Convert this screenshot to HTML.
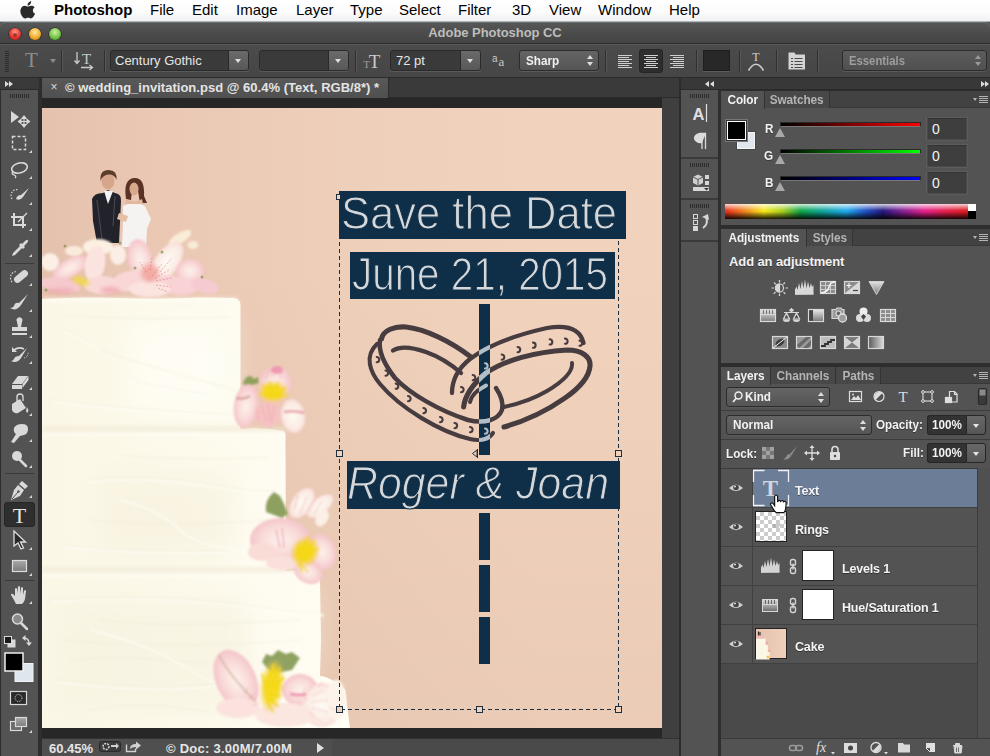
<!DOCTYPE html>
<html><head><meta charset="utf-8">
<style>
*{box-sizing:border-box;margin:0;padding:0}
html,body{width:990px;height:756px;overflow:hidden;background:#535353;font-family:"Liberation Sans",sans-serif;}
.abs{position:absolute}
.cx{display:inline-block;transform:scaleX(.9);transform-origin:0 50%;font-style:normal}
.cc{display:inline-block;transform:scaleX(.91);transform-origin:50% 50%;font-style:normal}
#root{position:relative;width:990px;height:756px;overflow:hidden;background:#535353}
/* menu bar */
#menubar{left:0;top:0;width:990px;height:22px;background:linear-gradient(#fff,#fbfbfb 60%,#f1f1f1);border-bottom:1px solid #a9b7bc}
#menubar span{position:absolute;top:1px;font-size:15px;color:#000;white-space:nowrap;line-height:17px}
/* title bar */
#titlebar{left:0;top:22px;width:990px;height:22px;box-shadow:inset 0 1px 0 #6e6e6e;background:linear-gradient(#585858,#4a4a4a 60%,#444);border-bottom:1px solid #2c2c2c;border-radius:5px 5px 0 0}
#titlebar .t{position:absolute;left:0;width:990px;top:3px;text-align:center;font-size:13px;font-weight:bold;color:#bdbdbd;letter-spacing:-.05px}
.tl{position:absolute;top:6px;width:12px;height:12px;border-radius:6px;box-shadow:0 0 0 .6px rgba(0,0,0,.55),0 1px 0 rgba(255,255,255,.18)}
.tl.r:after{content:"";position:absolute;left:4px;top:4.500px;width:4px;height:4px;border-radius:2px;background:rgba(60,0,0,.45)}
/* options bar */
#optbar{left:0;top:44px;width:990px;height:34px;background:linear-gradient(#4b4b4b,#464646);border-bottom:1px solid #2b2b2b;border-top:1px solid #5a5a5a}
.sep{position:absolute;top:50px;width:1px;height:22px;background:#2f2f2f;box-shadow:1px 0 0 #585858}
.dd{position:absolute;top:50px;height:21px;background:#3a3a3a;border:1px solid #2a2a2a;border-radius:3px;box-shadow:0 1px 0 #5a5a5a;color:#e6e6e6;font-size:13px;line-height:19px;padding-left:4px;white-space:nowrap;overflow:hidden}
.dd .b{position:absolute;right:0;top:0;width:20px;height:19px;background:linear-gradient(#6a6a6a,#585858);border-left:1px solid #2a2a2a}
.dd .b:after{content:"";position:absolute;left:6px;top:8px;border:3.5px solid transparent;border-top:4px solid #e0e0e0}
.dim.ud:before{border-bottom-color:#999}.dim.ud:after{border-top-color:#999}
.sel{position:absolute;top:50px;height:21px;background:linear-gradient(#646464,#555);border:1px solid #2c2c2c;border-radius:3px;box-shadow:0 1px 0 #5a5a5a;color:#f0f0f0;font-size:13px;line-height:19px;padding-left:6px;font-weight:bold}
.ud:before{content:"";position:absolute;right:5px;top:1px;border:3px solid transparent;border-bottom:4px solid #ddd}
.ud:after{content:"";position:absolute;right:5px;top:11px;border:3px solid transparent;border-top:4px solid #ddd}
</style></head><body><div id="root">

<!-- MENUBAR -->
<div id="menubar" class="abs">
<span style="left:54px;font-weight:bold">Photoshop</span>
<span style="left:150px">File</span><span style="left:192px">Edit</span><span style="left:236px">Image</span><span style="left:296px">Layer</span><span style="left:350px">Type</span><span style="left:399px">Select</span><span style="left:458px">Filter</span><span style="left:512px">3D</span><span style="left:549px">View</span><span style="left:598px">Window</span><span style="left:669px">Help</span>
</div>
<!-- TITLEBAR -->
<div id="titlebar" class="abs"><div class="t">Adobe Photoshop CC</div>
<div class="tl r" style="left:9px;background:radial-gradient(circle at 50% 35%,#ff9a8a,#e0302a 60%,#a01814)"></div>
<div class="tl" style="left:29px;background:radial-gradient(circle at 50% 35%,#ffe9a0,#f0a828 60%,#b87410)"></div>
<div class="tl" style="left:49px;background:radial-gradient(circle at 50% 35%,#d0f0a0,#6cc040 60%,#3a8a1c)"></div>
</div>
<!-- OPTIONS BAR -->
<div id="optbar" class="abs"></div>
<!-- apple logo -->
<svg class="abs" style="left:19px;top:1px" width="18" height="19" viewBox="0 0 18 19"><path d="M12.2 0.3c.1 1.1-.3 2.100-1 2.900-.7.800-1.700 1.400-2.700 1.300-.1-1 .4-2.100 1-2.800.7-.800 1.900-1.400 2.700-1.400zM15.600 6.400c-1.100.700-1.700 1.700-1.700 3 0 1.500.9 2.700 2.200 3.200-.3.900-.7 1.700-1.200 2.500-.8 1.200-1.600 2.300-2.900 2.300-1.200 0-1.600-.7-3-.7s-1.900.7-3 .8c-1.200 0-2.200-1.200-3-2.400C1.400 12.700.6 9.200 2.200 6.900c.8-1.300 2.200-2 3.700-2.100 1.200 0 2.300.8 3 .8.700 0 2.100-1 3.500-.8.600 0 2.300.2 3.200 1.600z" fill="#2a2a2a"/></svg>
<!-- gripper -->
<div class="abs" style="left:5px;top:51px;width:4px;height:21px;background:repeating-linear-gradient(#2c2c2c 0 1px,transparent 1px 2px)"></div>
<!-- T tool preset -->
<div class="abs" style="left:21px;top:46px;width:21px;height:28px;font-family:'Liberation Serif',serif;font-size:21px;line-height:28px;color:#8c8c8c;text-align:center">T</div>
<div class="abs" style="left:50px;top:59px;border:3px solid transparent;border-top:4px solid #8a8a8a"></div>
<div class="sep" style="left:61px"></div>
<!-- orientation -->
<svg class="abs" style="left:73px;top:50px" width="22" height="22" viewBox="0 0 22 22"><g stroke="#c9c9c9" fill="none" stroke-width="1.3"><path d="M4 2v11M1.500 10.500L4 13.500 6.500 10.500"/><path d="M8 17.500h11M16.500 15l3 2.500-3 2.500"/></g><text x="13.500" y="14" font-family="Liberation Serif" font-size="15" fill="#c9c9c9" text-anchor="middle">T</text></svg>
<div class="sep" style="left:104px"></div>
<div class="dd" style="left:110px;width:139px">Century Gothic<div class="b"></div></div>
<div class="dd" style="left:259px;width:90px"><div class="b"></div></div>
<div class="sep" style="left:355px"></div>
<svg class="abs" style="left:361px;top:51px" width="22" height="20" viewBox="0 0 22 20"><text x="5.500" y="17" font-family="Liberation Serif" font-size="11" fill="#9a9a9a" text-anchor="middle">T</text><text x="13.500" y="17" font-family="Liberation Serif" font-size="19" fill="#c9c9c9" text-anchor="middle">T</text></svg>
<div class="dd" style="left:390px;width:91px;padding-left:5px">72 pt<div class="b"></div></div>
<svg class="abs" style="left:491px;top:51px" width="18" height="18" viewBox="0 0 18 18"><text x="1" y="11" font-family="Liberation Sans" font-size="10" fill="#c9c9c9">a</text><text x="7.500" y="15" font-family="Liberation Serif" font-size="13" fill="#c9c9c9">a</text></svg>
<div class="sel ud" style="left:519px;width:80px"><i class="cx">Sharp</i></div>
<div class="sep" style="left:605px"></div>
<!-- align -->
<div class="abs" style="left:639px;top:49px;width:24px;height:24px;background:#2e2e2e;border:1px solid #262626;border-radius:3px"></div>
<svg class="abs" style="left:615px;top:52px" width="72" height="18" viewBox="0 0 72 18"><g stroke="#cfcfcf" stroke-width="1" shape-rendering="crispEdges">
<path d="M3 3.500h14M3 5.500h11M3 7.500h14M3 9.500h11M3 11.500h14M3 13.500h11M3 15.500h14"/>
<path d="M29 3.500h14M31 5.500h10M29 7.500h14M31 9.500h10M29 11.500h14M31 13.500h10M29 15.500h14"/>
<path d="M55 3.500h14M58 5.500h11M55 7.500h14M58 9.500h11M55 11.500h14M58 13.500h11M55 15.500h14"/></g></svg>
<div class="sep" style="left:696px"></div>
<div class="abs" style="left:703px;top:50px;width:27px;height:21px;background:#282828;border:1px solid #1e1e1e;box-shadow:0 1px 0 #5c5c5c"></div>
<div class="sep" style="left:739px"></div>
<svg class="abs" style="left:746px;top:50px" width="20" height="22" viewBox="0 0 20 22"><text x="10" y="11" font-family="Liberation Serif" font-size="12" fill="#d0d0d0" text-anchor="middle">T</text><path d="M2.500 20.500Q10 8 17.500 20.500" stroke="#d0d0d0" stroke-width="1.500" fill="none"/></svg>
<div class="sep" style="left:776px"></div>
<svg class="abs" style="left:787px;top:51px" width="20" height="20" viewBox="0 0 20 20"><path d="M1.500 1.500h6l1 2h9.500v15h-16.500z" fill="#d4d4d4"/><g stroke="#4a4a4a" stroke-width="1.200"><path d="M4 7.500h2M7.500 7.500h8M4 10.500h2M7.500 10.500h8M4 13.500h2M7.500 13.500h8M4 16.500h2M7.500 16.500h8"/></g></svg>
<div class="sep" style="left:817px"></div>
<div class="sel ud dim" style="left:842px;width:145px;color:#9e9e9e;background:linear-gradient(#5c5c5c,#505050)"><i class="cx" style="transform:scaleX(.87)">Essentials</i></div>

<!--OPT-->

<!-- TOOLBAR -->
<div class="abs" style="left:0;top:78px;width:42px;height:678px;background:#2e2e2e"></div>
<div class="abs" style="left:1px;top:78px;width:37px;height:678px;background:#535353"></div>
<div class="abs" style="left:0;top:78px;width:39px;height:12px;background:#3a3a3a;border-bottom:1px solid #2a2a2a"></div>
<div class="abs" style="left:5px;top:81px;border:3px solid transparent;border-left:4px solid #ddd;border-right:0"></div>
<div class="abs" style="left:9px;top:81px;border:3px solid transparent;border-left:4px solid #ddd;border-right:0"></div>
<div class="abs" style="left:10px;top:94px;width:19px;height:4px;background:repeating-linear-gradient(90deg,#2c2c2c 0 1px,transparent 1px 2px)"></div>
<svg class="abs" style="left:0;top:100px" width="42" height="656" viewBox="0 100 42 656">
<g fill="#d6d6d6" stroke="none">
<!-- flyout triangles -->
<g id="fly"><path d="M32 150v3h-3z"/><path d="M32 176v3h-3z"/><path d="M32 202v3h-3z"/><path d="M32 228v3h-3z"/><path d="M32 254v3h-3z"/><path d="M32 283v3h-3z"/><path d="M32 309v3h-3z"/><path d="M32 335v3h-3z"/><path d="M32 361v3h-3z"/><path d="M32 387v3h-3z"/><path d="M32 413v3h-3z"/><path d="M32 439v3h-3z"/><path d="M32 465v3h-3z"/><path d="M32 495v3h-3z"/><path d="M32 521v3h-3z"/><path d="M32 547v3h-3z"/><path d="M32 573v3h-3z"/><path d="M32 601v3h-3z"/><path d="M32 730v3h-3z"/></g>
</g>
<!-- separators -->
<g stroke="#3a3a3a" stroke-width="1"><path d="M5 263.500h29M5 473.500h29M5 580.500h29"/></g>
<!-- move -->
<path d="M11 111v12l8-6z" fill="#d9d9d9"/><path d="M24 117v9M19.500 121.500h9M24 116l-2 2.500h4zM24 127l-2-2.500h4zM18.500 121.500l2.500-2v4zM29.500 121.500l-2.500-2v4z" stroke="#d9d9d9" stroke-width="1.200" fill="#d9d9d9"/>
<!-- marquee -->
<rect x="12.500" y="136.500" width="13" height="13" fill="none" stroke="#d9d9d9" stroke-width="1.500" stroke-dasharray="3 2"/>
<!-- lasso -->
<ellipse cx="19.500" cy="168" rx="8" ry="5" transform="rotate(-15 19.500 168)" fill="none" stroke="#d9d9d9" stroke-width="1.600"/><path d="M13 171q-2 3 1 4t1 3" stroke="#d9d9d9" fill="none" stroke-width="1.300"/>
<!-- quick select -->
<path d="M12 199a5 6 0 0 1 6-9" fill="none" stroke="#d9d9d9" stroke-width="1.200" stroke-dasharray="1.500 1.500"/><path d="M29 188l-8 7 2 2zM21 195q-4 0-5 4 4 2 7-2z" fill="#d9d9d9"/>
<!-- crop -->
<path d="M14 213v12h12M11 217h12v11" fill="none" stroke="#d9d9d9" stroke-width="2"/><path d="M27 213l-9 9" stroke="#d9d9d9" stroke-width="1.200"/>
<!-- eyedropper -->
<path d="M27 239q2 2 0 4l-3 3 1 1-2 2-1-1-7 7-3 1 1-3 7-7-1-1 2-2 1 1 3-3q2-2 4 0z" fill="#d9d9d9"/>
<!-- heal -->
<path d="M12 282a5 6 0 0 1 5-10" fill="none" stroke="#d9d9d9" stroke-width="1.200" stroke-dasharray="1.500 1.500"/><rect x="13" y="273" width="16" height="7" rx="3.500" transform="rotate(-40 21 276.500)" fill="#d9d9d9"/>
<!-- brush -->
<path d="M28 294l-9 9 2 2zM19 303q-4-1-5 3-1 2-4 2 6 4 11-3z" fill="#d9d9d9"/>
<!-- stamp -->
<path d="M17 322a3 3 0 1 1 5 0l-1 5h6v4h-15v-4h6zM12 333h15v2h-15z" fill="#d9d9d9"/>
<!-- history brush -->
<path d="M27 348l-8 8 2 2zM19 356q-4 0-5 3-1 2-3 2 6 3 10-3z" fill="#d9d9d9"/><path d="M13 351q5-5 11-2" fill="none" stroke="#d9d9d9" stroke-width="1.500"/><path d="M12 347v5h5z" fill="#d9d9d9"/><path d="M24 358a5 5 0 0 0 4-6" fill="none" stroke="#d9d9d9" stroke-width="1" stroke-dasharray="1 1"/>
<!-- eraser -->
<path d="M18 376h10l-6 8h-10zM12 385h10v4h-10zM22.500 384l6-8v4l-6 8z" fill="#d9d9d9"/>
<!-- bucket -->
<path d="M12 404l8-5 6 9-8 5q-4 1-6-3z" fill="#d9d9d9"/><path d="M17 402v-5q0-3 3-3t3 3v4" fill="none" stroke="#d9d9d9" stroke-width="1.400"/><path d="M27 407q2 3 1 5t-2-1z" fill="#d9d9d9"/>
<!-- smudge -->
<path d="M14 428q2-4 8-4t6 5-4 6l-4 1-6 7-3-1 5-8q-3-2-2-6z" fill="#d9d9d9"/>
<!-- dodge -->
<circle cx="17" cy="456" r="5" fill="#d9d9d9"/><path d="M20 460l6 6" stroke="#d9d9d9" stroke-width="2.500" stroke-linecap="round"/>
<!-- pen -->
<path d="M22 481l6 5-3 3-6-5zM18 485l6 5-4 6-9 4 3-10z" fill="#d9d9d9"/><path d="M12 499l6-7" stroke="#535353" stroke-width="1"/><circle cx="18.500" cy="491.500" r="1.200" fill="#535353"/>
<!-- T selected -->
<rect x="4.500" y="502.500" width="30" height="24" rx="2.500" fill="#2e2e2e" stroke="#262626"/>
<text x="19.500" y="523" font-family="Liberation Serif" font-size="22" fill="#e4e4e4" text-anchor="middle">T</text>
<!-- path select -->
<path d="M14 531v15l4-3 3 6 2.500-1-3-6h5z" fill="#2a2a2a" stroke="#e0e0e0" stroke-width="1.300"/>
<!-- rectangle -->
<defs><linearGradient id="rg" x1="0" y1="0" x2="0" y2="1"><stop offset="0" stop-color="#a8a8a8"/><stop offset="1" stop-color="#7a7a7a"/></linearGradient></defs>
<rect x="12.500" y="560.500" width="14" height="11" fill="url(#rg)" stroke="#dcdcdc" stroke-width="1.200"/>
<!-- hand -->
<path d="M14 600l-3-5q0-2 2-1l2 2v-7q1-2 2 0v5l1-7q1-2 2 0v7l1-6q1-2 2 0v7l1-4q1-2 2 0l-1 8q-1 4-3 5h-6z" fill="#d9d9d9"/>
<!-- zoom -->
<circle cx="17.500" cy="619" r="5" fill="#8a8a8a" stroke="#d9d9d9" stroke-width="1.500"/><path d="M21 623l6 6" stroke="#d9d9d9" stroke-width="2.500" stroke-linecap="round"/>
<!-- default/swap colours -->
<rect x="8" y="640" width="7" height="7" fill="#d9d9d9" stroke="#d9d9d9"/><rect x="4.500" y="636.500" width="7" height="7" fill="#1a1a1a" stroke="#d9d9d9"/>
<path d="M24 638q5 0 5 6" fill="none" stroke="#d9d9d9" stroke-width="1.500"/><path d="M22 638l3.500-3v6zM29 646l-3-3.500h6z" fill="#d9d9d9"/>
<!-- fg/bg -->
<rect x="15" y="663.500" width="18" height="18" fill="#dfe6ee" stroke="#f4f4f4" stroke-width="1"/>
<rect x="5" y="653" width="18" height="18" fill="#000" stroke="#eee" stroke-width="1.500"/>
<!-- quick mask -->
<rect x="10.500" y="691.500" width="16" height="13" fill="#2a2a2a" stroke="#d9d9d9" stroke-width="1.200"/><circle cx="18.500" cy="698" r="3.500" fill="none" stroke="#d9d9d9" stroke-width="1" stroke-dasharray="1 1"/>
<!-- screen mode -->
<rect x="10.500" y="721.500" width="11" height="9" fill="#6a6a6a" stroke="#d9d9d9" stroke-width="1.200"/><rect x="15.500" y="717.500" width="11" height="9" fill="url(#rg)" stroke="#d9d9d9" stroke-width="1.200"/>
</svg>

<!--TOOLBAR-->
<!-- DOC AREA -->
<div class="abs" style="left:42px;top:78px;width:638px;height:20px;background:#3a3a3a;border-bottom:1px solid #2a2a2a"></div>
<div class="abs" style="left:41px;top:78px;width:348px;height:20px;background:linear-gradient(#585858,#505050);border-right:1px solid #2a2a2a;border-left:1px solid #2a2a2a"></div>
<div class="abs" style="left:50.500px;top:80px;font-size:12px;color:#d8d8d8;line-height:15px">×</div>
<div class="abs" id="tabtxt" style="left:65px;top:80px;font-size:13px;font-weight:bold;color:#e4e4e4;line-height:15px;white-space:nowrap;letter-spacing:.02px">© wedding_invitation.psd @ 60.4% (Text, RGB/8*) *</div>
<div class="abs" style="left:42px;top:98px;width:638px;height:640px;background:#272727"></div>
<div class="abs" style="left:662px;top:98px;width:17px;height:640px;background:#3f3f3f"></div>
<div class="abs" style="left:679px;top:78px;width:2px;height:678px;background:#2c2c2c"></div>
<!-- status bar -->
<div class="abs" style="left:42px;top:738px;width:637px;height:18px;background:#4a4a4a;border-top:1px solid #333"></div>
<div class="abs" style="left:42px;top:738px;width:290px;height:18px;background:#4f4f4f;border-top:1px solid #333"></div>
<div class="abs" style="left:49px;top:741px;font-size:13px;color:#e6e6e6;line-height:15px;font-weight:bold;letter-spacing:0">60.45%</div>
<div class="abs" style="left:166px;top:741px;font-size:13px;color:#e6e6e6;line-height:15px;font-weight:bold;letter-spacing:.25px;white-space:nowrap">© Doc: 3.00M/7.00M</div>
<div class="abs" style="left:317px;top:743px;border:5px solid transparent;border-left:7px solid #e0e0e0"></div>
<svg class="abs" style="left:98px;top:740px" width="48" height="14" viewBox="0 0 48 14"><rect x="1.500" y="1.500" width="21" height="10" rx="2" fill="#3c3c3c" stroke="#2a2a2a"/><circle cx="8" cy="6.500" r="3" fill="none" stroke="#d0d0d0" stroke-width="1.500" stroke-dasharray="2 1"/><path d="M13 5h5v-2l3 3-3 3v-2h-5z" fill="#d0d0d0"/><path d="M28.500 4.500v7h9v-3" fill="none" stroke="#d0d0d0" stroke-width="1.400"/><path d="M32 9q0-5 6-5v-2.500l5 4-5 4v-2.500q-4 0-6 2z" fill="#d0d0d0"/></svg>
<!--STATUS-->
<!-- IMAGE -->
<svg class="abs" style="left:42px;top:108px" width="620" height="620" viewBox="42 108 620 620">
<defs>
<linearGradient id="bgp" x1="0" x2="1" y1="0" y2="0"><stop offset="0.00" stop-color="#e5c2ae"/><stop offset="0.10" stop-color="#e7c5b1"/><stop offset="0.20" stop-color="#eac8b4"/><stop offset="0.30" stop-color="#eccbb6"/><stop offset="0.40" stop-color="#edcdb8"/><stop offset="0.50" stop-color="#eecfba"/><stop offset="0.60" stop-color="#efd0bb"/><stop offset="0.70" stop-color="#f0d1bc"/><stop offset="0.80" stop-color="#f1d2bd"/><stop offset="0.90" stop-color="#f1d2bd"/><stop offset="1.00" stop-color="#f1d2bd"/></linearGradient>
<linearGradient id="bgv" x1="0" x2="0" y1="0" y2="1"><stop offset=".25" stop-color="#78502e" stop-opacity="0"/><stop offset="1" stop-color="#78502e" stop-opacity=".05"/></linearGradient>
<linearGradient id="ck" gradientUnits="userSpaceOnUse" x1="42" x2="330"><stop offset="0" stop-color="#fbf7e6"/><stop offset=".5" stop-color="#fdfaec"/><stop offset="1" stop-color="#fffdf4"/></linearGradient>
<radialGradient id="pet"><stop offset="0" stop-color="#fdf1ec"/><stop offset=".6" stop-color="#f9dcda"/><stop offset="1" stop-color="#f5c4ca"/></radialGradient>
<radialGradient id="petw"><stop offset="0" stop-color="#fefaf4"/><stop offset=".7" stop-color="#fbeee6"/><stop offset="1" stop-color="#f8dcd8"/></radialGradient>
<radialGradient id="yel"><stop offset="0" stop-color="#f6dc0c"/><stop offset=".55" stop-color="#f4d820" stop-opacity=".95"/><stop offset="1" stop-color="#f2c850" stop-opacity="0"/></radialGradient>
<filter id="b2"><feGaussianBlur stdDeviation="2"/></filter>
<filter id="b4"><feGaussianBlur stdDeviation="4"/></filter>
<filter id="b8" x="-30%" y="-30%" width="160%" height="160%"><feGaussianBlur stdDeviation="14"/></filter>
<filter id="b1"><feGaussianBlur stdDeviation="1"/></filter>
<filter id="b05" x="-5%" y="-5%" width="110%" height="110%"><feGaussianBlur stdDeviation="0.45"/></filter>
</defs>
<rect x="42" y="108" width="620" height="620" fill="url(#bgp)"/><rect x="42" y="108" width="620" height="620" fill="url(#bgv)"/>
<!-- cake tiers -->
<path d="M42 299 Q80 296.500 120 298 T200 297.500 L234 298 Q241 299 240.500 306 L240.500 431 L42 431Z" fill="url(#ck)"/>
<path d="M42 429 L240 429 Q262 427 284 431 Q286 434 285.500 440 L286 575 L42 575Z" fill="url(#ck)"/>
<path d="M42 571 L286 571 Q310 568 320 580 L321 640 L320 676 Q330 676 345 690 L350 728 L42 728Z" fill="url(#ck)"/>
<!-- soft shading on cake -->
<g filter="url(#b8)">
<path d="M130 320h100v90h-100z" fill="#fffef6" opacity=".7"/>
<path d="M100 475h130v80h-130z" fill="#f6f1de" opacity=".7"/>
<path d="M60 600h190v110h-190z" fill="#f7f2e0" opacity=".7"/>
<path d="M250 590h60v80h-60z" fill="#fefcf2" opacity=".7"/>
</g>
<g filter="url(#b2)" opacity=".7">
<path d="M42 427h243v4h-243z" fill="#ece4cc"/>
<path d="M42 568h278v4h-278z" fill="#ece4cc"/>
<path d="M42 432h243v4h-243z" fill="#fffdf6"/>
<path d="M42 573h278v4h-278z" fill="#fffdf6"/>
<path d="M42 298h196v4h-196z" fill="#fffdf6"/>
</g>
<!-- frosting strokes -->
<g stroke="#efe8d2" stroke-width="1.200" fill="none" opacity=".5" filter="url(#b1)">
<path d="M60 330q30 8 50 30t40 25 60 10"/><path d="M100 350q60 20 135 40"/><path d="M50 400q80 10 185 15"/><path d="M60 315q80 6 170 2"/>
<path d="M85 480q60 -6 120 4t70 6"/><path d="M90 520q80 8 180 0"/><path d="M60 545q100 10 200 4"/><path d="M120 455q60 6 150 2"/>
<path d="M50 600q100 -8 200 6t60 4"/><path d="M60 640q120 10 240 0"/><path d="M55 680q100 12 160 4"/><path d="M90 710q50 -10 120 2"/><path d="M100 620q60 8 200 0"/><path d="M70 660q60 -6 140 4"/>
</g>
<g stroke="#fffefa" stroke-width="1.400" fill="none" opacity=".8" filter="url(#b1)">
<path d="M62 332q30 8 50 30t40 25 60 10"/><path d="M52 402q80 10 185 15"/><path d="M87 482q60 -6 120 4t70 6"/><path d="M62 547q100 10 200 4"/><path d="M52 602q100 -8 200 6t60 4"/><path d="M57 682q100 12 160 4"/><path d="M120 500q40 10 60 30t80 20"/><path d="M90 630q60 14 100 40t90 20"/>
</g>
<!-- topper -->
<g filter="url(#b05)">
<path d="M92 199q2 -6 11 -6l5 -3 7 3q7 1 6 9l-2 41h-22l-4 -22z" fill="#24232b"/>
<path d="M104 191l4 13 5 -13z" fill="#f2f2f2"/>
<path d="M97 200l5 40M115 196l-2 30" stroke="#4a4a55" stroke-width="1" fill="none"/>
<ellipse cx="108" cy="181" rx="6.500" ry="8.500" fill="#d6a68a"/>
<path d="M100.500 181q-1 -11 8 -11t8 10q-2 -6 -8 -5.500t-8 6.500z" fill="#5b3c2c"/>
<path d="M126 199q-3 -20 8 -21t10 18l3 7h-7l-2 -12q-3 -5 -6 0l-1 9z" fill="#5a3226"/>
<ellipse cx="134" cy="189" rx="4.500" ry="6.500" fill="#d9a98c"/>
<path d="M123 206q11 -6 22 0l6 13 -4 10 -1 18h-24l1 -24z" fill="#f5f3f2"/>
<path d="M126 199q8 5 16 0l1 5h-18z" fill="#e2b79e"/>
<path d="M119 213l9 3 -2 6 -9 -3z" fill="#e6c0a6"/>
</g>
<!-- top flowers -->
<g filter="url(#b1)">
<ellipse cx="98" cy="247" rx="15" ry="8" fill="#fbf0e2"/>
<ellipse cx="74" cy="251" rx="9" ry="5" fill="#f9ebdc"/>
<ellipse cx="50" cy="262" rx="9" ry="9" fill="#fbefe6"/>
<ellipse cx="70" cy="268" rx="19" ry="9" transform="rotate(-30 70 268)" fill="url(#pet)"/>
<ellipse cx="95" cy="264" rx="10" ry="18" transform="rotate(10 95 264)" fill="#fbe4df"/>
<ellipse cx="60" cy="285" rx="21" ry="7" transform="rotate(8 60 285)" fill="#f6c9ce"/>
<ellipse cx="102" cy="285" rx="18" ry="9" fill="#f9d9d8"/>
<ellipse cx="180" cy="238" rx="13" ry="5" transform="rotate(-32 180 238)" fill="#f9ecd8"/>
<ellipse cx="193" cy="245" rx="5.500" ry="4" fill="#f7ebd6"/>
<ellipse cx="140" cy="259" rx="12" ry="20" transform="rotate(-10 140 259)" fill="url(#pet)"/>
<ellipse cx="167" cy="262" rx="12" ry="23" transform="rotate(35 167 262)" fill="url(#petw)"/>
<ellipse cx="190" cy="271" rx="14" ry="12" fill="url(#pet)"/>
<ellipse cx="130" cy="281" rx="18" ry="10" transform="rotate(-10 130 281)" fill="#f9d7d7"/>
<ellipse cx="174" cy="285" rx="23" ry="9" transform="rotate(10 174 285)" fill="#f8d2d4"/>
<ellipse cx="205" cy="286" rx="14" ry="7" transform="rotate(15 205 286)" fill="#f6cad1"/>
<ellipse cx="150" cy="289" rx="21" ry="8" fill="#fbe3df"/>
<ellipse cx="118" cy="255" rx="8" ry="10" fill="#fbeee6"/>
</g>
<g filter="url(#b2)"><ellipse cx="150" cy="273" rx="9" ry="9" fill="#f2a59c" opacity=".85"/><ellipse cx="81" cy="281" rx="9" ry="3.500" transform="rotate(20 81 281)" fill="#f2d84a"/><ellipse cx="110" cy="290" rx="10" ry="3" fill="#f0a0ac" opacity=".8"/><ellipse cx="60" cy="291" rx="14" ry="2.500" fill="#ee9ca8" opacity=".7"/></g>
<g stroke="#e0607c" stroke-width=".9" fill="none" opacity=".55" stroke-dasharray="2 1.500"><path d="M152 276l10 -12M155 278l14 -8M156 281l16 -3M156 285l15 2M150 270l2 -12M146 272l-6 -10M160 272l12 -14M158 288l10 4"/></g>
<g fill="#8c9858" opacity=".8"><circle cx="65" cy="246" r="1.500"/><circle cx="120" cy="243" r="1.500"/><circle cx="162" cy="252" r="1.500"/><circle cx="202" cy="277" r="1.500"/><circle cx="135" cy="268" r="1.500"/><circle cx="46" cy="290" r="1.500"/></g>
<!-- side flower 1 -->
<g filter="url(#b1)">
<path d="M243 383q3 -8 8 -7l3 3 4 -2 1 6 -14 4z" fill="#8fa05c"/>
<ellipse cx="246" cy="406" rx="12" ry="22" transform="rotate(8 246 406)" fill="url(#pet)"/>
<ellipse cx="275" cy="385" rx="16" ry="19" transform="rotate(15 275 385)" fill="url(#pet)"/>
<ellipse cx="293" cy="416" rx="12" ry="17" transform="rotate(-10 293 416)" fill="url(#petw)"/>
<ellipse cx="268" cy="414" rx="13" ry="13" fill="#f5c2c2"/>
<ellipse cx="277" cy="370" rx="6" ry="4" fill="#ee9ab0"/>
<ellipse cx="273" cy="392" rx="16" ry="12" fill="url(#yel)"/>
<g stroke="#f4d616" stroke-width="1.600" stroke-linecap="round"><path d="M272 396l-10 -12M273 395l-4 -13M275 395l3 -13M277 396l9 -9M278 398l10 -3M270 398l-10 -4"/></g>
<g stroke="#e88a98" stroke-width=".9" stroke-dasharray="2 1.500" opacity=".8"><path d="M262 406l4 16M268 404l2 18M274 406l-2 16M258 410l0 10M266 378l4 -8M272 376l2 -8M280 378l2 -6"/></g>
<path d="M284 412q10 -2 20 1" stroke="#eaa0a8" stroke-width="2.500" fill="none"/>
<path d="M236 398q8 2 14 -2" stroke="#d8a49c" stroke-width="2.500" fill="none"/>
</g>
<!-- side flower 2 -->
<g filter="url(#b1)">
<path d="M266 512q-2 -12 8 -20l6 4 4 8 4 10 -6 4z" fill="#8ea060"/>
<ellipse cx="302" cy="503" rx="10" ry="17" transform="rotate(35 302 503)" fill="url(#petw)"/>
<ellipse cx="320" cy="506" rx="8" ry="16" transform="rotate(50 320 506)" fill="url(#petw)"/>
<ellipse cx="322" cy="518" rx="6" ry="9" transform="rotate(30 322 518)" fill="#faf0e6"/>
<ellipse cx="280" cy="540" rx="30" ry="22" fill="url(#pet)"/>
<ellipse cx="262" cy="552" rx="14" ry="9" fill="#f9dcd6"/>
<ellipse cx="322" cy="552" rx="14" ry="18" transform="rotate(-15 322 552)" fill="url(#pet)"/>
<ellipse cx="308" cy="572" rx="15" ry="11" transform="rotate(30 308 572)" fill="url(#pet)"/>
<ellipse cx="282" cy="563" rx="16" ry="7" fill="#fae0dc"/>
<ellipse cx="305" cy="552" rx="15" ry="17" transform="rotate(30 305 552)" fill="url(#yel)"/>
<g stroke="#f4d616" stroke-width="1.600" stroke-linecap="round"><path d="M300 556l8 -20M302 558l13 -18M303 560l16 -12M298 562l4 10M300 564l8 8M296 558l2 -14"/></g>
<path d="M276 530l4 18M282 528l2 20" stroke="#ee9aac" stroke-width="1.500" fill="none" opacity=".7"/>
<g stroke="#e88a90" stroke-width=".9" stroke-dasharray="2 1.500" fill="none"><path d="M298 496l-4 14M306 498l-6 16M314 500l-6 12M322 502l-8 12"/></g>
</g>
<!-- bottom flower -->
<g filter="url(#b1)">
<path d="M262 662l4 -8 6 2 6 -6 8 4 6 -2 8 6 -8 12 -20 4z" fill="#90a262"/>
<ellipse cx="236" cy="680" rx="20" ry="32" transform="rotate(-25 236 680)" fill="url(#pet)"/>
<ellipse cx="238" cy="708" rx="22" ry="10" fill="#fbe2de"/>
<ellipse cx="300" cy="690" rx="18" ry="16" fill="url(#pet)"/>
<ellipse cx="322" cy="705" rx="20" ry="22" fill="url(#petw)"/>
<ellipse cx="285" cy="715" rx="30" ry="12" fill="#fbe6e0"/>
<ellipse cx="336" cy="700" rx="10" ry="20" fill="#fcf4ea"/>
<ellipse cx="272" cy="686" rx="13" ry="28" transform="rotate(8 272 686)" fill="url(#yel)"/>
<g stroke="#f4d616" stroke-width="1.700" stroke-linecap="round"><path d="M268 684l6 -20M270 686l10 -18M272 688l12 -10M268 694l12 2M268 698l10 8M267 702l6 10M266 690l-4 -16"/></g>
<path d="M219 655q10 20 36 46" stroke="#caa890" stroke-width="2" fill="none" opacity=".6"/>
<path d="M290 694q10 2 16 0" stroke="#ee98b0" stroke-width="3" fill="none"/>
<g stroke="#ec8a8e" stroke-width=".9" fill="none" opacity=".7" stroke-dasharray="2 1.500"><path d="M308 690l8 -8M312 696l12 -6M312 702l16 -2M312 708l16 4M310 714l12 8M306 700l-2 -12M318 686l6 -4M330 708l8 2"/></g>
<g stroke="#e890a0" stroke-width=".9" fill="none" opacity=".6"><path d="M248 700l6 -6M252 706l8 -4M244 694l4 -6"/></g>
</g>
<!--CAKE-->
<!-- rings -->
<defs>
<g id="ringsL">
<path d="M381.500 339C383 330 395 326 406 327C425 329 450 341 471 357" stroke-width="5.1"/>
<path d="M377 344C364 356 370 372 380 384C400 408 440 432 470 439C482 442 490 438 493 433" stroke-width="4.1"/>
<path d="M380 340C378 352 384 364 395 378C410 394 440 411 468 420C485 424 498 420 502 410C504 402 500 394 496 388" stroke-width="4.5"/>
<path d="M393 350.500C400 346 412 347 426 352C440 357 452 365 461 373" stroke-width="4.3"/>
</g>
<g id="ringsR">
<path d="M452 393C452 378 460 367 470 359C490 344 520 334 547 328C565 325 580 328 583.500 343" stroke-width="4.3"/>
<path d="M463.600 407C465 395 474 383 486 373C505 360 535 352 567 350C582 350 591 357 590 366C589 378 578 389 565 398C548 410 525 421 504 427" stroke-width="5.1"/>
<path d="M572 363C573 372 562 382 547 391C535 398 518 404 504 407" stroke-width="3.9"/>
<path d="M470 402C472 394 478 390 486 385.500" stroke-width="3.9"/>
</g>
<g id="rdots" stroke-width="2.100">
<path d="M376.700 357a2.600 2.600 0 0 1 0 5.200"/><path d="M385.500 370.500a2.600 2.600 0 0 1 0 5.200"/><path d="M395.700 383.600a2.600 2.600 0 0 1 0 5.200"/><path d="M408 396a2.600 2.600 0 0 1 0 5.200"/><path d="M423.400 408a2.600 2.600 0 0 1 0 5.200"/><path d="M440 417a2.600 2.600 0 0 1 0 5.200"/><path d="M454.500 423a2.600 2.600 0 0 1 0 5.200"/><path d="M470 427a2.600 2.600 0 0 1 0 5.200"/><path d="M485 428.500a2.600 2.600 0 0 1 0 5.200"/>
<path d="M461 387a2.600 2.600 0 0 1 0 5.200"/><path d="M472.700 375a2.600 2.600 0 0 1 0 5.200"/><path d="M485 363.300a2.600 2.600 0 0 1 0 5.200"/><path d="M501.700 354.500a2.600 2.600 0 0 1 0 5.200"/><path d="M517.600 347a2.600 2.600 0 0 1 0 5.200"/><path d="M533 342.600a2.600 2.600 0 0 1 0 5.200"/><path d="M549.700 339.300a2.600 2.600 0 0 1 0 5.200"/><path d="M565 338.600a2.600 2.600 0 0 1 0 5.200"/><path d="M579.500 340.600a2.600 2.600 0 0 1 0 5.200"/>
</g>
<clipPath id="barclip"><rect x="479" y="304" width="11" height="151"/></clipPath>
</defs>
<g fill="none" stroke="#463c3f" stroke-linecap="round" filter="url(#b05)"><use href="#ringsL"/><use href="#ringsR"/><use href="#rdots"/></g>
<!-- vertical bar + text highlight boxes -->
<g fill="#0f2f49">
<rect x="479" y="304" width="11" height="151"/>
<rect x="339" y="191" width="287" height="48"/>
<rect x="350" y="252" width="265" height="47"/>
<rect x="347" y="461" width="273" height="48"/>
<rect x="479" y="513" width="11" height="47"/>
<rect x="479" y="565" width="11" height="47"/>
<rect x="479" y="617" width="11" height="47"/>
</g>
<g fill="none" stroke="#b3bfc6" stroke-linecap="round" clip-path="url(#barclip)"><use href="#ringsL"/><use href="#ringsR"/><use href="#rdots"/></g>
<g font-family="Liberation Sans" fill="#d5d7d9" stroke="#0f2f49" stroke-width="1.100">
<text id="t1" x="479" y="228.500" font-size="47" text-anchor="middle" textLength="276" lengthAdjust="spacingAndGlyphs">Save the Date</text>
<text id="t2" x="480" y="289.500" font-size="47" text-anchor="middle" textLength="256" lengthAdjust="spacingAndGlyphs">June 21, 2015</text>
<text id="t3" x="478" y="498.500" font-size="47" font-style="italic" text-anchor="middle" textLength="262" lengthAdjust="spacingAndGlyphs">Roger &amp; Joan</text>
</g>
<!-- selection bounding box -->
<g fill="none" stroke="#1c2f40" stroke-width="1" stroke-dasharray="4 3" shape-rendering="crispEdges">
<path d="M339.500 200V709.500H618.500V240"/>
</g>
<g fill="#efd2be" stroke="#1c2f40" stroke-width="1" shape-rendering="crispEdges">
<rect x="336.500" y="450.500" width="6" height="6"/><rect x="615.500" y="450.500" width="6" height="6"/>
<rect x="336.500" y="706.500" width="6" height="6"/><rect x="476.500" y="706.500" width="6" height="6"/><rect x="615.500" y="706.500" width="6" height="6"/>
<rect x="336.500" y="194.500" width="4" height="5"/>
</g>
<path d="M472.500 453.500l4.500-3.500v7zM477.500 449v9" stroke="#1c2f40" fill="#efd2be" stroke-width="1"/>

<!--DESIGN-->
</svg>

<!--DOC-->
<!--DOCK-->
<style>
.ptabbar{position:absolute;left:721px;width:269px;height:18px;background:#424242;border-bottom:1px solid #383838;border-top:1px solid #2c2c2c}
.ptab{position:absolute;top:0;height:17px;font-size:13px;font-weight:bold;line-height:18px;color:#b4b4b4;text-align:center;border-right:1px solid #333;background:#484848;letter-spacing:-.1px}
.ptab.on{background:#535353;color:#f2f2f2;height:18px}
.pmenu{position:absolute;right:2px;top:5px;width:9px;height:8px;background:repeating-linear-gradient(#b4b4b4 0 1px,transparent 1px 2px)}
.pmenu:before{content:"";position:absolute;left:-6px;top:2px;border:2.500px solid transparent;border-top:3px solid #b4b4b4}
.pbody{position:absolute;left:721px;width:269px;background:#535353}
.lbl{position:absolute;font-size:13px;font-weight:bold;color:#f2f2f2;line-height:15px;white-space:nowrap;text-shadow:0 1px 0 rgba(0,0,0,.35)}
.vbox{position:absolute;left:927px;width:40px;height:22px;background:#3e3e3e;border:1px solid #4a4a4a;border-top-color:#333;box-shadow:0 0 0 1px #5c5c5c;font-size:14px;color:#f4f4f4;line-height:20px;padding-left:4px}
.sl{position:absolute;left:780px;width:141px;height:5px;border:1px solid #2a2a2a;border-bottom-color:#777}
.th{position:absolute;width:0;height:0;border:5.500px solid transparent;border-bottom:9px solid #a8a8a8;border-top:0}
.fld{position:absolute;left:927px;width:39px;height:20px;background:#333;border:1px solid #262626;border-right:0;border-radius:3px 0 0 3px;font-size:13px;color:#f2f2f2;line-height:18px;padding-left:4px;font-weight:bold}
.fbt{position:absolute;left:966px;width:20px;height:20px;background:linear-gradient(#686868,#565656);border:1px solid #262626;border-radius:0 3px 3px 0}
.fbt:after{content:"";position:absolute;left:6px;top:8px;border:3px solid transparent;border-top:4px solid #e8e8e8}
.row{position:absolute;left:721px;width:256px;height:39px;background:#535353;border-bottom:1px solid #404040}
.row .eyec{position:absolute;left:0;top:0;width:32px;height:38px;border-right:1px solid #404040;background:#535353}
.row .nm{transform:scaleX(.965);transform-origin:0 50%;position:absolute;top:14px;font-size:13px;letter-spacing:-.2px;font-weight:bold;color:#f4f4f4;line-height:15px;white-space:nowrap;text-shadow:0 1px 0 rgba(0,0,0,.4)}
.thumb{position:absolute;left:34px;top:3px;width:32px;height:31px;border:1px solid #222}
.mask{position:absolute;left:81px;top:3px;width:32px;height:31px;background:#fff;border:1px solid #222}
</style>
<!-- top header band -->
<div class="abs" style="left:681px;top:78px;width:309px;height:12px;background:#383838;border-bottom:1px solid #2a2a2a"></div>
<div class="abs" style="left:705px;top:81px;border:3px solid transparent;border-right:4px solid #ddd;border-left:0"></div>
<div class="abs" style="left:710px;top:81px;border:3px solid transparent;border-right:4px solid #ddd;border-left:0"></div>
<div class="abs" style="left:981px;top:81px;border:3px solid transparent;border-left:4px solid #ddd;border-right:0"></div>
<div class="abs" style="left:985px;top:81px;border:3px solid transparent;border-left:4px solid #ddd;border-right:0"></div>
<!-- dock -->
<div class="abs" style="left:681px;top:91px;width:37px;height:665px;background:#535353"></div>
<div class="abs" style="left:718px;top:90px;width:3px;height:666px;background:#2e2e2e"></div>
<div class="abs" style="left:681px;top:157px;width:37px;height:2px;background:#3a3a3a"></div>
<div class="abs" style="left:681px;top:198px;width:37px;height:2px;background:#3a3a3a"></div>
<div class="abs" style="left:681px;top:240px;width:37px;height:2px;background:#3a3a3a"></div>
<div class="abs" style="left:690px;top:94px;width:19px;height:4px;background:repeating-linear-gradient(90deg,#2c2c2c 0 1px,transparent 1px 2px)"></div>
<div class="abs" style="left:690px;top:163px;width:19px;height:4px;background:repeating-linear-gradient(90deg,#2c2c2c 0 1px,transparent 1px 2px)"></div>
<div class="abs" style="left:690px;top:204px;width:19px;height:4px;background:repeating-linear-gradient(90deg,#2c2c2c 0 1px,transparent 1px 2px)"></div>
<svg class="abs" style="left:681px;top:100px" width="37" height="140" viewBox="681 100 37 140">
<text x="692.500" y="119.500" font-family="Liberation Sans" font-weight="bold" font-size="16.500" fill="#e0e0e0">A</text><path d="M706.500 104v18" stroke="#e0e0e0" stroke-width="1.200"/>
<path d="M702 133v16M705.500 133v16M706 133.500h-6a4.500 4.500 0 0 0 0 9h2" fill="#dcdcdc" stroke="#dcdcdc" stroke-width="1.300"/><path d="M697 134h5v8h-3a4 4 0 0 1-2-8z" fill="#dcdcdc"/>
<!-- 3d icon -->
<path d="M693 177l5-2.500 5 2.500v6l-5 2.500-5-2.500z" fill="#cfcfcf"/><path d="M693 177l5 2.500 5-2.500M698 179.500v6" stroke="#555" stroke-width="1" fill="none"/><rect x="705" y="175" width="4" height="4" fill="#d6d6d6"/><rect x="705" y="181" width="4" height="4" fill="#d6d6d6"/><rect x="693" y="187" width="16" height="4" fill="#d6d6d6"/><path d="M704 188l2.500 2.500 2.500-2.500z" fill="#333"/>
<!-- history icon -->
<rect x="693.500" y="214.500" width="4" height="4" fill="none" stroke="#d6d6d6"/><rect x="693.500" y="220.500" width="4" height="4" fill="none" stroke="#d6d6d6"/><rect x="693" y="226" width="5" height="5" fill="#d6d6d6"/>
<path d="M703 228q6-4 3-11" fill="none" stroke="#d6d6d6" stroke-width="2"/><path d="M702 217l6-3 1 6z" fill="#d6d6d6"/>
</svg>
<!-- COLOR PANEL -->
<div class="pbody" style="top:90px;height:136px"></div>
<div class="ptabbar" style="top:90px"><div class="ptab on" style="left:0;width:44px"><i class="cc">Color</i></div><div class="ptab" style="left:44px;width:65px"><i class="cc">Swatches</i></div><div class="pmenu"></div></div>
<div class="abs" style="left:737px;top:132px;width:18px;height:17px;background:#dfe6ee;border:1px solid #f6f6f6;box-shadow:0 0 0 1px #444"></div>
<div class="abs" style="left:727px;top:121px;width:19px;height:19px;background:#000;border:1px solid #fff;box-shadow:0 0 0 1px #333,0 0 0 2px #777"></div>
<div class="lbl" style="left:765px;top:121px"><i class="cx">R</i></div><div class="lbl" style="left:764px;top:148px"><i class="cx">G</i></div><div class="lbl" style="left:765px;top:175px"><i class="cx">B</i></div>
<div class="sl" style="top:122px;background:linear-gradient(90deg,#000,#f00)"></div>
<div class="sl" style="top:149px;background:linear-gradient(90deg,#000,#0f0)"></div>
<div class="sl" style="top:176px;background:linear-gradient(90deg,#000,#00f)"></div>
<div class="th" style="left:775px;top:128px"></div><div class="th" style="left:775px;top:155px"></div><div class="th" style="left:775px;top:182px"></div>
<div class="vbox" style="top:118px">0</div><div class="vbox" style="top:145px">0</div><div class="vbox" style="top:172px">0</div>
<div class="abs" style="left:725px;top:204px;width:243px;height:15px;background:linear-gradient(rgba(255,255,255,.8),rgba(255,255,255,0) 45%,rgba(0,0,0,0) 50%,rgba(0,0,0,.9)),linear-gradient(90deg,#ea2a1c,#f08420 8%,#f6e818 16%,#a4cc20 24%,#10a448 31%,#10a498 40%,#20a8ec 50%,#2050c4 58%,#24187c 65%,#782090 72%,#e4208c 82%,#e42044 92%,#dc1c1c)"></div>
<div class="abs" style="left:968px;top:204px;width:8px;height:7px;background:#fff"></div><div class="abs" style="left:968px;top:211px;width:8px;height:8px;background:#000"></div>
<div class="abs" style="left:721px;top:225px;width:269px;height:3px;background:#2e2e2e"></div>
<!-- ADJUSTMENTS PANEL -->
<div class="pbody" style="top:228px;height:135px"></div>
<div class="ptabbar" style="top:228px"><div class="ptab on" style="left:0;width:86px"><i class="cc">Adjustments</i></div><div class="ptab" style="left:86px;width:46px"><i class="cc">Styles</i></div><div class="pmenu"></div></div>
<div class="lbl" style="left:729px;top:254px;letter-spacing:-.1px">Add an adjustment</div>
<svg class="abs" style="left:721px;top:270px" width="269" height="90" viewBox="721 270 269 90">
<defs>
<linearGradient id="g1" x1="0" y1="0" x2="0" y2="1"><stop offset="0" stop-color="#e4e4e4"/><stop offset="1" stop-color="#7c7c7c"/></linearGradient>
<linearGradient id="g2" x1="0" y1="0" x2="1" y2="0"><stop offset="0" stop-color="#5a5a5a"/><stop offset="1" stop-color="#dcdcdc"/></linearGradient>
</defs>
<g stroke="#d8d8d8" fill="none" stroke-width="1.200">
<!-- row1 -->
<circle cx="779.500" cy="288" r="4" /><path d="M779.500 284a4 4 0 0 0 0 8z" fill="#d8d8d8"/><path d="M779.500 280v2.500M779.500 293.500v2.500M771.500 288h2.500M785.500 288h2.500M774 282.500l1.800 1.800M783.500 292l1.800 1.800M785 282.500l-1.800 1.800M775.500 292l-1.800 1.800"/>
<path d="M795 294.500v-5l1.500-3 1 3.500 1.500-7 1.500 6 1.500-8 1.500 7.500 1.500-9 1.500 9 1.500-7 1.500 6.500 1.500-5 1 4 1.500-2v9z" fill="#d8d8d8" stroke="none"/><path d="M795 294h18.500" stroke="#d8d8d8" stroke-width="1.500"/>
<rect x="820.500" y="281.500" width="15" height="12" fill="#8a8a8a"/><path d="M820.500 285.500h15M820.500 289.500h15M825.500 281.500v12M830.500 281.500v12" stroke-width=".8"/><path d="M821 293q7-1 8-6t6-5" stroke="#f4f4f4" stroke-width="1.400"/>
<rect x="844.500" y="281.500" width="15" height="12" fill="#8a8a8a"/><path d="M844.500 293.500l15-12v12z" fill="#d8d8d8" stroke="none"/><path d="M846.500 285.500h5M849 283v5" stroke="#f4f4f4" stroke-width="1.200"/><path d="M853 290.500h5" stroke="#444" stroke-width="1.200"/>
<path d="M869 281.500h15l-7.500 13z" fill="url(#g1)" stroke="#d0d0d0" stroke-width="1"/>
<!-- row2 -->
<rect x="760.500" y="309.500" width="15" height="12" fill="url(#g1)"/><path d="M760.500 314.500h15" /><path d="M763.500 310v4M766.500 310v4M769.500 310v4M772.500 310v4" stroke="#777" stroke-width="1"/>
<path d="M791.500 308v4M784 312.500h15M786.500 313l-3 6h6zM796.500 313l-3 6h6z" stroke-width="1.200"/><path d="M783 319.500a3.500 2.500 0 0 0 7 0zM793 319.500a3.500 2.500 0 0 0 7 0z" fill="#d8d8d8" stroke="none"/><path d="M789.500 309h4v2.500h-4z" fill="#d8d8d8" stroke="none"/>
<rect x="808.500" y="309.500" width="15" height="12" fill="#444"/><rect x="813" y="310" width="10" height="11" fill="url(#g1)" stroke="none"/>
<path d="M832 309.500h4l1-1.500h4l1 1.500h2v9h-12z" fill="#9a9a9a"/><circle cx="838.500" cy="313.500" r="2.500" fill="#666"/><circle cx="842.500" cy="318" r="4" fill="#9c9c9c" stroke="#e0e0e0" stroke-width="1.300"/>
<circle cx="863.500" cy="311.500" r="4" fill="#ececec" stroke="none"/><circle cx="860" cy="318" r="4" fill="#dcdcdc" stroke="none"/><circle cx="867" cy="318" r="4" fill="#dcdcdc" stroke="none"/><path d="M863.500 314l-2.500 2.500 2.500 3.500 2.500-3.500z" fill="#444" stroke="none"/>
<rect x="880.500" y="309.500" width="15" height="12" fill="#8c8c8c"/><path d="M880.500 313.500h15M880.500 317.500h15M885.500 309.500v12M890.500 309.500v12" stroke-width="1"/>
<!-- row3 -->
<rect x="772.500" y="336.500" width="15" height="12" fill="#8a8a8a"/><ellipse cx="780" cy="342.500" rx="5" ry="3" transform="rotate(-35 780 342.500)" fill="#3c3c3c" stroke="none"/><path d="M773 348l14-11" stroke="#eee" stroke-width="1"/>
<rect x="796.500" y="336.500" width="15" height="12" fill="#9a9a9a"/><path d="M797 345l9-8h5l-12 11zM803 348l8-8v5l-3 3z" fill="#6a6a6a" stroke="none"/>
<rect x="820.500" y="336.500" width="15" height="12" fill="#bdbdbd"/><path d="M821 346h4v-2h3v-2h3v-2h4" stroke="#333" stroke-width="1.800"/>
<rect x="844.500" y="336.500" width="15" height="12" fill="#7a7a7a"/><path d="M845 337l7 5.500-7 5.500zM859 337l-7 5.500 7 5.500z" fill="#d6d6d6" stroke="none"/>
<rect x="868.500" y="336.500" width="15" height="12" fill="url(#g2)"/>
</g>
</svg>

<!--ADJICONS-->
<div class="abs" style="left:721px;top:363px;width:269px;height:3px;background:#2e2e2e"></div>
<!-- LAYERS PANEL -->
<div class="pbody" style="top:366px;height:390px"></div>
<div class="ptabbar" style="top:366px"><div class="ptab on" style="left:0;width:50px"><i class="cc">Layers</i></div><div class="ptab" style="left:50px;width:65px"><i class="cc">Channels</i></div><div class="ptab" style="left:115px;width:45px"><i class="cc">Paths</i></div><div class="pmenu"></div></div>
<div class="sel ud" style="left:726px;top:387px;width:104px;height:20px;line-height:18px;padding-left:18px"><i class="cx">Kind</i></div>
<svg class="abs" style="left:731px;top:390px" width="14" height="14" viewBox="0 0 14 14"><circle cx="7.500" cy="5.500" r="3.500" fill="none" stroke="#eee" stroke-width="1.500"/><path d="M5 8.500l-3 3.500" stroke="#eee" stroke-width="1.800"/></svg>
<!--LICONS-->
<div class="abs" style="left:721px;top:410px;width:269px;height:1px;background:#3c3c3c"></div>
<div class="sel ud" style="left:726px;top:415px;width:146px;height:20px;line-height:18px"><i class="cx">Normal</i></div>
<div class="lbl" style="left:876px;top:417px"><i class="cx">Opacity:</i></div>
<div class="fld" style="top:415px"><i class="cx">100%</i></div><div class="fbt" style="top:415px"></div>
<div class="abs" style="left:721px;top:439px;width:269px;height:1px;background:#3c3c3c"></div>
<div class="lbl" style="left:726px;top:446px"><i class="cx">Lock:</i></div>
<div class="lbl" style="left:903px;top:445px"><i class="cx">Fill:</i></div>
<div class="fld" style="top:443px"><i class="cx">100%</i></div><div class="fbt" style="top:443px"></div>
<!-- layer list -->
<div class="abs" style="left:721px;top:468px;width:256px;height:270px;background:#4a4a4a;border-top:1px solid #3a3a3a"></div>
<div class="abs" style="left:977px;top:468px;width:13px;height:270px;background:#505050;border-left:1px solid #3c3c3c"></div>
<div class="row" style="top:469px;background:#6b7d97"><div class="eyec"></div><div class="nm" style="left:74px">Text</div></div>
<div class="row" style="top:508px"><div class="eyec"></div><div class="thumb" style="background:#fff repeating-conic-gradient(#ccc 0 25%,#fff 0 50%) 0 0/8px 8px"></div><div class="nm" style="left:74px">Rings</div></div>
<div class="row" style="top:547px"><div class="eyec"></div><div class="mask"></div><div class="nm" style="left:121px">Levels 1</div></div>
<div class="row" style="top:586px"><div class="eyec"></div><div class="mask"></div><div class="nm" style="left:121px">Hue/Saturation 1</div></div>
<div class="row" style="top:625px"><div class="eyec"></div><div class="thumb" style="background:linear-gradient(90deg,#e5c2ae,#efd0ba)"></div><div class="nm" style="left:74px">Cake</div></div>
<!--LAYERX-->
<div class="abs" style="left:721px;top:738px;width:269px;height:18px;background:#535353;border-top:1px solid #3a3a3a"></div>
<svg class="abs" style="left:721px;top:384px" width="269" height="372" viewBox="721 384 269 372">
<g fill="none" stroke="#dedede" stroke-width="1.200">
<!-- filter icons -->
<rect x="849.500" y="391.500" width="12" height="10"/><path d="M851 400l3-4 2 2 2-3 3 5z" fill="#dedede" stroke="none"/><circle cx="853" cy="394.500" r="1" fill="#dedede" stroke="none"/>
<circle cx="879" cy="396.500" r="5"/><path d="M875.500 400a5 5 0 0 1 7-7z" fill="#dedede" stroke="none"/>
<text x="903" y="402" font-family="Liberation Serif" font-size="15" fill="#dedede" stroke="none" text-anchor="middle">T</text>
<rect x="923" y="392" width="9" height="9" stroke-width="1.100"/><g fill="#535353" stroke-width="1"><circle cx="923" cy="392" r="1.400"/><circle cx="932" cy="392" r="1.400"/><circle cx="923" cy="401" r="1.400"/><circle cx="932" cy="401" r="1.400"/></g>
<path d="M949.500 391.500h5l2.500 2.500v8h-7.500z"/><path d="M954.500 391.500v3h3" /><rect x="945.500" y="397.500" width="6" height="5" fill="#dedede"/>
<!-- toggle -->
<rect x="978.500" y="388.500" width="8" height="16" rx="1.500" fill="#3a3a3a" stroke="#2a2a2a"/><rect x="979.500" y="389.500" width="6" height="6" fill="#8a8a8a" stroke="none"/>
<!-- lock icons -->
<g stroke="none"><rect x="762" y="447" width="12" height="12" fill="#787878"/><path d="M762 447h4v4h-4zM770 447h4v4h-4zM766 451h4v4h-4zM762 455h4v4h-4zM770 455h4v4h-4z" fill="#a2a2a2"/></g>
<path d="M797 446l-7 8 1.500 1.500zM790 454q-3 0-4 3-1 2-3 2 5 2 8-3z" fill="#8e8e8e" stroke="none"/>
<path d="M812 446v14M805 453h14" stroke-width="1.300"/><path d="M812 445l-2.500 3h5zM812 461l-2.500-3h5zM804 453l3-2.500v5zM820 453l-3-2.500v5z" fill="#dedede" stroke="none"/>
<rect x="830" y="452" width="10" height="8" rx="1" fill="#dedede" stroke="none"/><path d="M832 452v-2.500a3 3 0 0 1 6 0v2.500" stroke-width="1.600"/><circle cx="835" cy="456" r="1.200" fill="#444" stroke="none"/>
</g>
<!-- eyes -->
<g id="eye"><path d="M729 488q7-7 14 0-7 6.500-14 0z" fill="#d0d0d0"/><circle cx="736" cy="487.500" r="2.800" fill="#444"/><circle cx="735" cy="486.500" r="1" fill="#ddd"/></g>
<use href="#eye" y="39"/><use href="#eye" y="78"/><use href="#eye" y="117"/><use href="#eye" y="156"/>
<!-- Text thumb -->
<g stroke="#eef2f6" stroke-width="1.300" fill="none"><path d="M753.500 482v-11.500h11M778 470.500h10.500v11.500M788.500 495v10.500h-10.500M764.500 505.500h-11v-10.500"/></g>
<text x="770.500" y="495.500" font-family="Liberation Serif" font-weight="bold" font-size="23" fill="#cfd6de" text-anchor="middle">T</text>
<!-- rings thumb speck -->
<path d="M772 525h8M773 527h6" stroke="#9a9a9a" stroke-width="1"/>
<!-- levels icon -->
<path d="M761 572.500v-5l1.500-3 1 3.500 1.500-7 1.500 6 1.500-8 1.500 7.500 1.500-9 1.500 9 1.500-7 1.500 6.500 1.500-5 1 4 1.500-2v9z" fill="#d4d4d4"/><path d="M761 572h18.500" stroke="#d4d4d4" stroke-width="1.500"/>
<!-- hue icon -->
<defs><linearGradient id="hg" x1="0" y1="0" x2="0" y2="1"><stop offset="0" stop-color="#dcdcdc"/><stop offset="1" stop-color="#6a6a6a"/></linearGradient></defs>
<rect x="762.500" y="599.500" width="15" height="12" fill="url(#hg)" stroke="#d8d8d8"/><path d="M762.500 604.500h15" stroke="#d8d8d8"/><path d="M765.500 600v4M768.500 600v4M771.500 600v4M774.500 600v4" stroke="#666"/>
<!-- chains -->
<g id="chain" fill="none" stroke="#d4d4d4" stroke-width="1.400"><rect x="790.500" y="559.500" width="5" height="6" rx="2"/><rect x="790.500" y="567.500" width="5" height="6" rx="2"/><path d="M793 563.500v6"/></g>
<use href="#chain" y="39"/>
<!-- cake thumb detail -->
<path d="M756 638.500h9.600v6.500h2.200v7h1.800v7.500h-13.600z" fill="#fbf7e6"/><path d="M758.500 631.500v4M760 632v3.500" stroke="#3a3030" stroke-width="1.200"/><path d="M756 637.500h8" stroke="#f2b8bc" stroke-width="1.600"/><circle cx="767" cy="643" r="1.200" fill="#f0a0a8"/><circle cx="769.500" cy="651" r="1.300" fill="#f0a8a8"/><circle cx="768" cy="657" r="1.500" fill="#f2c060"/>
<!-- footer icons -->
<g fill="none" stroke="#9a9a9a" stroke-width="1.500"><rect x="789.500" y="745.500" width="7" height="5" rx="2.500"/><rect x="795.500" y="745.500" width="7" height="5" rx="2.500"/></g>
<text x="816" y="752" font-family="Liberation Serif" font-style="italic" font-size="14" fill="#e0e0e0">fx</text><path d="M831 752h4l-2 2.500z" fill="#ddd"/>
<rect x="844.500" y="743.500" width="12" height="9" fill="#dcdcdc" stroke="#dcdcdc"/><circle cx="850.500" cy="748" r="2.500" fill="#444"/>
<circle cx="876" cy="747.500" r="5" fill="none" stroke="#dcdcdc" stroke-width="1.300"/><path d="M872.500 751a5 5 0 0 0 7-7z" fill="#dcdcdc"/><path d="M884 752h4l-2 2.500z" fill="#ddd"/>
<path d="M898 743h5l1 1.500h6v8h-12z" fill="#d8d8d8"/>
<path d="M926 743h9v9h-5v-4h-4z" fill="#e0e0e0"/><path d="M926 748l4 4" stroke="#e0e0e0"/>
<path d="M953 745.500h9M955.500 745v-1.500h4v1.500M954 746l.8 7h6.400l.8-7z" fill="#d8d8d8" stroke="#d8d8d8" stroke-width="1"/><path d="M956.500 747.500v4.500M958.500 747.500v4.500" stroke="#555" stroke-width=".8"/>
<!-- hand cursor -->
<g transform="translate(770.500 495) scale(1.18)"><path d="M3 13l-3-5q0-2 2-1l1.500 2v-8q1-2 2.500 0v5l.5-1q1.500-1 2 .5l.5-.5q1.500-1 2 .8l.5-.3q1.500-.5 1.800 1.500l-.5 5q-.5 2-1.500 3h-6.500z" fill="#fff" stroke="#111" stroke-width="1"/></g>
</svg>

<!--FOOTICONS-->

<!--PANELS-->
</div></body></html>
